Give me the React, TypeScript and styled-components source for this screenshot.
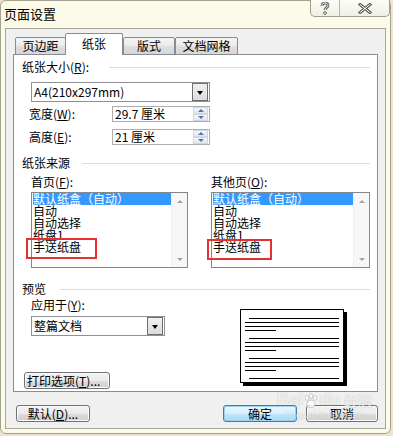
import styled, { createGlobalStyle } from "styled-components";

const GlobalStyle = createGlobalStyle`
  html, body { margin: 0; padding: 0; }
  body {
    width: 393px;
    height: 436px;
    overflow: hidden;
    background: #ece2d0;
    font-family: "Noto Sans CJK SC", "Liberation Sans", sans-serif;
    font-size: 12px;
    color: #000;
  }
  * { box-sizing: border-box; }
  u { text-decoration: underline; text-underline-offset: 1px; }
`;

const Window = styled.div`
  position: relative;
  width: 391px;
  height: 434px;
  display: flex;
  flex-direction: column;
  background: #fbfbe8;
  border: 1px solid #a3a290;
  border-radius: 6px;
`;

const TitleBar = styled.div`
  height: 27px;
  display: flex;
  justify-content: space-between;
  align-items: flex-start;
`;

const Title = styled.div`
  padding: 5px 0 0 3px;
  font-size: 13px;
  line-height: 15px;
`;

const Controls = styled.div`
  display: flex;
  height: 17px;
  margin-top: -1px;
  border: 1px solid #9c9c92;
  border-top: none;
  border-radius: 0 0 5px 5px;
  background: linear-gradient(#fdfdf7, #efefe4);
  overflow: hidden;
`;

const CtrlButton = styled.div<{ $w: number }>`
  width: ${(p) => p.$w}px;
  display: flex;
  align-items: center;
  justify-content: center;
  & + & {
    border-left: 1px solid #b8b8ae;
  }
`;

const Client = styled.div`
  flex: 1;
  margin: 0 4px 4px 4px;
  padding: 4px 7px 0 7px;
  display: flex;
  flex-direction: column;
  background: #f0f0f0;
  border: 1px solid #a5a59a;
`;

const TabRow = styled.div`
  position: relative;
  z-index: 1;
  display: flex;
  align-items: flex-end;
  height: 22px;
  margin: 0 0 -1px 2px;
`;

const Tab = styled.div<{ $active?: boolean; $w: number }>`
  width: ${(p) => p.$w}px;
  height: ${(p) => (p.$active ? 22 : 18)}px;
  margin-left: ${(p) => (p.$active ? -1 : 0)}px;
  display: flex;
  align-items: center;
  justify-content: center;
  padding-bottom: ${(p) => (p.$active ? 2 : 0)}px;
  border: 1px solid #898c95;
  border-bottom: ${(p) => (p.$active ? "none" : "1px solid #898c95")};
  border-radius: 2px 2px 0 0;
  background: ${(p) =>
    p.$active
      ? "#ffffff"
      : "linear-gradient(#f4f4f4, #ececec 45%, #dedede 55%, #d6d6d6)"};
  line-height: 12px;
`;

const Panel = styled.div`
  width: 365px;
  height: 338px;
  padding: 6px 7px 0 8px;
  background: #ffffff;
  border: 1px solid #898c95;
`;

const GroupHeader = styled.div<{ $top: number; $gap: number }>`
  display: flex;
  align-items: center;
  height: 12px;
  margin-top: ${(p) => p.$top}px;
  line-height: 12px;
  span {
    margin-right: ${(p) => p.$gap}px;
  }
`;

const Rule = styled.div`
  flex: 1;
  height: 1px;
  background: #d5dfe5;
`;

const Indent = styled.div<{ $top?: number }>`
  margin-left: 9px;
  margin-top: ${(p) => p.$top ?? 0}px;
`;

const Select = styled.div<{ $w: number; $top: number }>`
  width: ${(p) => p.$w}px;
  height: 20px;
  margin-top: ${(p) => p.$top}px;
  display: flex;
  align-items: center;
  justify-content: space-between;
  padding: 1px;
  border: 1px solid #8e9096;
  background: #fff;
  line-height: 12px;
  > span {
    padding-left: 1px;
  }
`;

const DropButton = styled.div`
  width: 16px;
  height: 18px;
  display: flex;
  align-items: center;
  justify-content: center;
  border: 1px solid #6f6f6f;
  background: linear-gradient(#f0f0f0, #dcdcdc);
  &::after {
    content: "";
    border-left: 3px solid transparent;
    border-right: 3px solid transparent;
    border-top: 4px solid #000;
    margin-top: 1px;
  }
`;

const FieldRow = styled.div<{ $top: number }>`
  display: flex;
  align-items: center;
  height: 16px;
  margin: ${(p) => p.$top}px 0 0 7px;
  line-height: 12px;
`;

const FieldLabel = styled.span`
  width: 83px;
`;

const SpinInput = styled.div`
  width: 98px;
  height: 16px;
  display: flex;
  align-items: center;
  justify-content: space-between;
  padding: 0 1px 0 2px;
  border: 1px solid #abadb3;
  background: #fff;
`;

const Spinner = styled.div`
  display: flex;
  flex-direction: column;
  width: 15px;
  height: 14px;
`;

const SpinHalf = styled.div<{ $up?: boolean }>`
  flex: 1;
  display: flex;
  align-items: center;
  justify-content: center;
  border: 1px solid #d3d8de;
  background: linear-gradient(#f4f6f9, #e3e8ee);
  &::after {
    content: "";
    border-left: 3px solid transparent;
    border-right: 3px solid transparent;
    ${(p) =>
      p.$up
        ? "border-bottom: 3px solid #4f78b5;"
        : "border-top: 3px solid #4f78b5;"}
  }
`;

const Columns = styled.div`
  display: flex;
  margin: 7px 0 0 9px;
  gap: 23px;
`;

const Column = styled.div<{ $w: number }>`
  width: ${(p) => p.$w}px;
  display: flex;
  flex-direction: column;
  line-height: 12px;
`;

const ListWrap = styled.div`
  position: relative;
  margin-top: 4px;
`;

const ListBox = styled.div`
  height: 76px;
  display: flex;
  border: 1px solid #828790;
  background: #fff;
`;

const Items = styled.div`
  flex: 1;
  padding: 0 0 0 1px;
`;

const Item = styled.div<{ $selected?: boolean }>`
  height: 12px;
  line-height: 12px;
  white-space: nowrap;
  color: ${(p) => (p.$selected ? "#fff" : "#000")};
  background: ${(p) => (p.$selected ? "#3399ff" : "transparent")};
`;

const ScrollBar = styled.div`
  width: 16px;
  display: flex;
  flex-direction: column;
  justify-content: space-between;
  background: #f7f7f7;
  border-left: 1px solid #f0f0f0;
`;

const ScrollArrow = styled.div<{ $down?: boolean }>`
  height: 16px;
  display: flex;
  align-items: center;
  justify-content: center;
  &::after {
    content: "";
    border-left: 3px solid transparent;
    border-right: 3px solid transparent;
    ${(p) =>
      p.$down
        ? "border-top: 3px solid #a3a3a3;"
        : "border-bottom: 3px solid #a3a3a3;"}
  }
`;

const Mark = styled.div<{ $left: number; $top: number; $w: number }>`
  position: absolute;
  left: ${(p) => p.$left}px;
  top: ${(p) => p.$top}px;
  width: ${(p) => p.$w}px;
  height: 21px;
  border: 2px solid #e8312f;
`;

const PreviewRow = styled.div`
  display: flex;
  align-items: flex-start;
`;

const PreviewLeft = styled.div`
  width: 160px;
  margin-left: 9px;
  display: flex;
  flex-direction: column;
  align-items: flex-start;
  line-height: 12px;
`;

const Page = styled.div`
  width: 104px;
  height: 74px;
  margin: 14px 0 0 49px;
  border: 1px solid #000;
  background: #fff;
  box-shadow: 3px 3px 0 #000;
  svg {
    display: block;
  }
`;

const Button = styled.div<{ $w: number; $default?: boolean }>`
  width: ${(p) => p.$w}px;
  height: 17px;
  display: flex;
  align-items: center;
  justify-content: center;
  border: 1px solid ${(p) => (p.$default ? "#3c7fb1" : "#707070")};
  border-radius: 3px;
  background: ${(p) =>
    p.$default
      ? "linear-gradient(#eaf6fd, #d9f0fc 50%, #bee6fd 51%, #a7d9f5)"
      : "linear-gradient(#f2f2f2, #ebebeb 50%, #dddddd 51%, #cfcfcf)"};
  box-shadow: ${(p) => (p.$default ? "inset 0 0 0 1px #9ed0ee" : "inset 0 0 0 1px #fcfcfc")};
  line-height: 12px;
  white-space: nowrap;
`;

const PrintButton = styled(Button)`
  margin: 36px 0 0 -7px;
  justify-content: flex-start;
  padding-left: 2px;
`;

const ButtonRow = styled.div`
  display: flex;
  margin: 13px 0 0 3px;
  gap: 9px;
`;

const Spacer = styled.div`
  flex: 1;
`;

const Watermark = styled.div`
  position: absolute;
  left: 276px;
  top: 390px;
  display: flex;
  flex-direction: column;
  align-items: flex-start;
  color: rgba(255, 255, 255, 0.75);
  text-shadow: 0 0 1px rgba(120, 120, 120, 0.5);
  pointer-events: none;
  font-family: "Liberation Sans", sans-serif;
`;

const MarkTop = styled.div`
  display: flex;
  align-items: flex-end;
  font-size: 17px;
  font-weight: bold;
  line-height: 18px;
  span.cn {
    margin-left: 4px;
    font-family: "Noto Sans CJK SC", sans-serif;
    font-size: 14px;
  }
`;

const MarkSub = styled.div`
  font-size: 9px;
  line-height: 10px;
  margin: 1px 0 0 9px;
  letter-spacing: 0.3px;
`;

const pageLines: [number, number, number][] = [];
[9, 29, 49].forEach((y) => {
  pageLines.push([y, 9, 99], [y + 4, 5, 99], [y + 8, 5, 99], [y + 12, 5, 36]);
});
pageLines.push([69, 9, 99]);

const sourceItems = ["默认纸盒（自动）", "自动", "自动选择", "纸盘1", "手送纸盘"];

function List({ w, markLeft, markTop, markW }: { w: number; markLeft: number; markTop: number; markW: number }) {
  return (
    <ListWrap style={{ width: w }}>
      <ListBox>
        <Items>
          {sourceItems.map((t, i) => (
            <Item key={t} $selected={i === 0}>
              {t}
            </Item>
          ))}
        </Items>
        <ScrollBar>
          <ScrollArrow />
          <ScrollArrow $down />
        </ScrollBar>
      </ListBox>
      <Mark $left={markLeft} $top={markTop} $w={markW} />
    </ListWrap>
  );
}

export default function App() {
  return (
    <>
      <GlobalStyle />
      <Window>
        <TitleBar>
          <Title>页面设置</Title>
          <Controls>
            <CtrlButton $w={28}>
              <svg width="10" height="13" viewBox="0 0 10 13">
                <path d="M2 4 C2 1.6 3.6 1 5 1 C6.6 1 8 1.8 8 3.6 C8 5.6 5 5.8 5 8" fill="none" stroke="#5a5a5a" strokeWidth="2.8" />
                <path d="M2 4 C2 1.6 3.6 1 5 1 C6.6 1 8 1.8 8 3.6 C8 5.6 5 5.8 5 8" fill="none" stroke="#fff" strokeWidth="1" />
                <circle cx="5" cy="11" r="1.4" fill="#fff" stroke="#5a5a5a" strokeWidth="0.9" />
              </svg>
            </CtrlButton>
            <CtrlButton $w={50}>
              <svg width="14" height="11" viewBox="0 0 14 11">
                <path d="M2 1.5 L12 9.5 M12 1.5 L2 9.5" stroke="#5a5a5a" strokeWidth="3" strokeLinecap="square" />
                <path d="M2 1.5 L12 9.5 M12 1.5 L2 9.5" stroke="#fff" strokeWidth="1" strokeLinecap="square" />
              </svg>
            </CtrlButton>
          </Controls>
        </TitleBar>

        <Client>
          <TabRow>
            <Tab $w={51}>页边距</Tab>
            <Tab $w={58} $active>
              纸张
            </Tab>
            <Tab $w={52}>版式</Tab>
            <Tab $w={63}>文档网格</Tab>
          </TabRow>

          <Panel>
            <GroupHeader $top={0} $gap={20}>
              <span>
                纸张大小(<u>R</u>):
              </span>
              <Rule />
            </GroupHeader>
            <Indent>
              <Select $w={179} $top={9}>
                <span>A4(210x297mm)</span>
                <DropButton />
              </Select>
            </Indent>
            <FieldRow $top={4}>
              <FieldLabel>
                宽度(<u>W</u>):
              </FieldLabel>
              <SpinInput>
                <span>29.7 厘米</span>
                <Spinner>
                  <SpinHalf $up />
                  <SpinHalf />
                </Spinner>
              </SpinInput>
            </FieldRow>
            <FieldRow $top={7}>
              <FieldLabel>
                高度(<u>E</u>):
              </FieldLabel>
              <SpinInput>
                <span>21 厘米</span>
                <Spinner>
                  <SpinHalf $up />
                  <SpinHalf />
                </Spinner>
              </SpinInput>
            </FieldRow>

            <GroupHeader $top={12} $gap={12}>
              <span>纸张来源</span>
              <Rule />
            </GroupHeader>
            <Columns>
              <Column $w={157}>
                <span>
                  首页(<u>F</u>):
                </span>
                <List w={157} markLeft={-5} markTop={46} markW={71} />
              </Column>
              <Column $w={159}>
                <span>
                  其他页(<u>O</u>):
                </span>
                <List w={159} markLeft={-4} markTop={47} markW={65} />
              </Column>
            </Columns>

            <GroupHeader $top={15} $gap={14}>
              <span>预览</span>
              <Rule />
            </GroupHeader>
            <PreviewRow>
              <PreviewLeft>
                <Indent $top={4} style={{ marginLeft: 0 }}>
                  应用于(<u>Y</u>):
                </Indent>
                <Select $w={134} $top={5}>
                  <span>整篇文档</span>
                  <DropButton />
                </Select>
                <PrintButton $w={86}>
                  打印选项(<u>T</u>)...
                </PrintButton>
              </PreviewLeft>
              <Page>
                <svg width="102" height="72" viewBox="0 0 102 72">
                  {pageLines.map(([y, x1, x2], i) => (
                    <line key={i} x1={x1 - 1} x2={x2 - 1} y1={y - 0.5} y2={y - 0.5} stroke="#000" strokeWidth="1" />
                  ))}
                </svg>
              </Page>
            </PreviewRow>
          </Panel>

          <ButtonRow>
            <Button $w={74}>
              默认(<u>D</u>)...
            </Button>
            <Spacer />
            <Button $w={74} $default>
              确定
            </Button>
            <Button $w={72}>取消</Button>
          </ButtonRow>
        </Client>

        <Watermark>
          <MarkTop>
            <span>Bai</span>
            <svg width="16" height="16" viewBox="0 0 16 16">
              <g fill="rgba(255,255,255,0.8)" stroke="rgba(140,140,140,0.5)" strokeWidth="0.8">
                <ellipse cx="4" cy="5" rx="1.8" ry="2.4" />
                <ellipse cx="8" cy="3" rx="1.8" ry="2.4" />
                <ellipse cx="12" cy="5" rx="1.8" ry="2.4" />
                <path d="M8 7 C5 7 3 11 4.5 13.5 C6 15 10 15 11.5 13.5 C13 11 11 7 8 7 Z" />
              </g>
            </svg>
            <span>du</span>
            <span className="cn">经验</span>
          </MarkTop>
          <MarkSub>jingyan.baidu.com</MarkSub>
        </Watermark>
      </Window>
    </>
  );
}
